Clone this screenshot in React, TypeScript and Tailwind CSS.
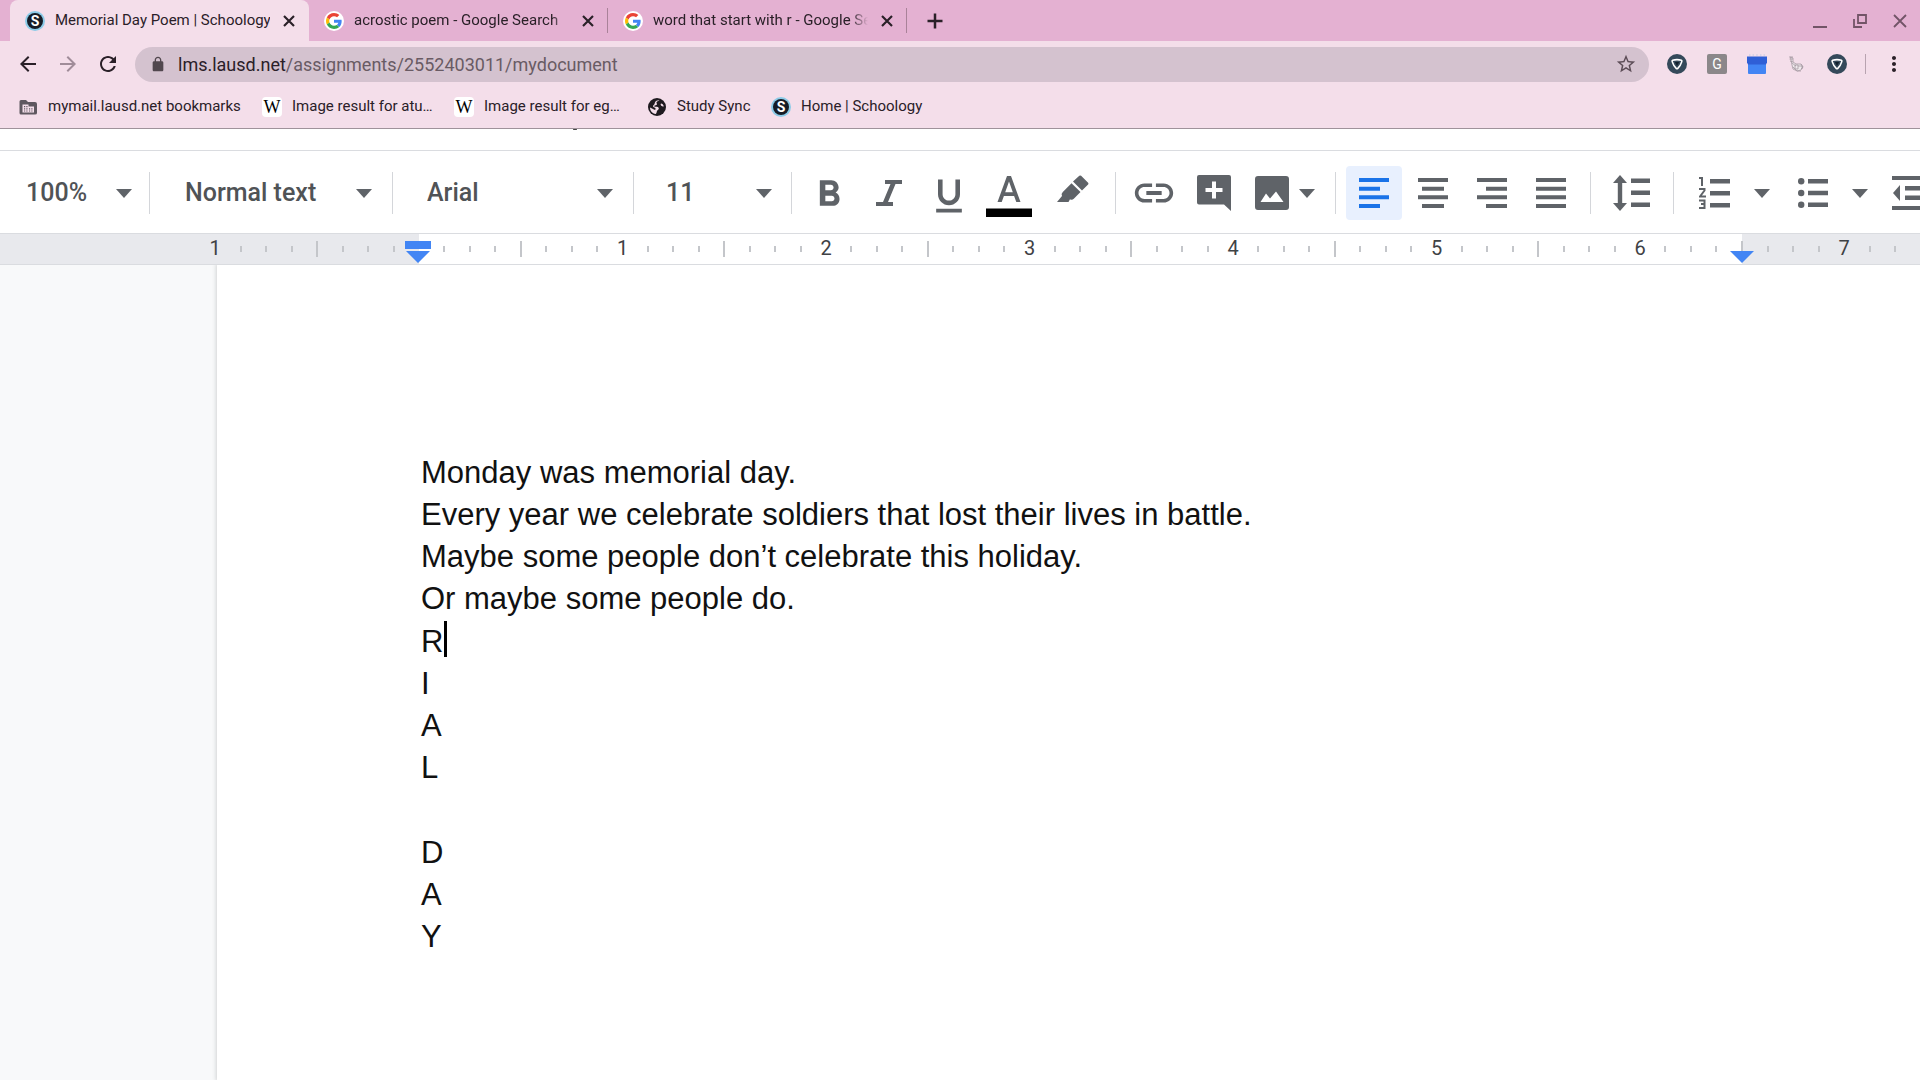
import React from "react";

type IconProps = { className?: string };

const Svg = ({
  className,
  box = "0 0 24 24",
  children,
}: {
  className?: string;
  box?: string;
  children: React.ReactNode;
}) => (
  <svg viewBox={box} className={className} fill="currentColor" aria-hidden="true">
    {children}
  </svg>
);

const GoogleIcon = () => (
  <span className="flex size-5 shrink-0 items-center justify-center rounded-full bg-white">
    <Svg className="size-4" box="0 0 48 48">
      <path fill="#EA4335" d="M24 9.5c3.54 0 6.71 1.22 9.21 3.6l6.85-6.85C35.9 2.38 30.47 0 24 0 14.62 0 6.51 5.38 2.56 13.22l7.98 6.19C12.43 13.72 17.74 9.5 24 9.5z" />
      <path fill="#4285F4" d="M46.98 24.55c0-1.57-.15-3.09-.38-4.55H24v9.02h12.94c-.58 2.96-2.26 5.48-4.78 7.18l7.73 6c4.51-4.18 7.09-10.36 7.09-17.65z" />
      <path fill="#FBBC05" d="M10.53 28.59c-.48-1.45-.76-2.99-.76-4.59s.27-3.14.76-4.59l-7.98-6.19C.92 16.46 0 20.12 0 24c0 3.88.92 7.54 2.56 10.78l7.97-6.19z" />
      <path fill="#34A853" d="M24 48c6.48 0 11.93-2.13 15.89-5.81l-7.73-6c-2.15 1.45-4.92 2.3-8.16 2.3-6.26 0-11.57-4.22-13.47-9.91l-7.98 6.19C6.51 42.62 14.62 48 24 48z" />
    </Svg>
  </span>
);

const SchoologyIcon = () => (
  <span className="flex size-5 shrink-0 items-center justify-center rounded-full bg-[#8ccbe8]">
    <span className="flex size-4 items-center justify-center rounded-full bg-[#151b26] text-[14px] leading-none font-bold text-white">
      S
    </span>
  </span>
);

const WikiIcon = () => (
  <span className="flex size-5 shrink-0 items-center justify-center rounded-sm bg-white font-['Liberation_Serif',serif] text-[18px] leading-none text-black">
    W
  </span>
);

const FolderIcon = () => (
  <Svg className="size-5 text-[#5f5860]" box="0 0 20 20">
    <path d="M3 3h5l2 2h7q2 0 2 2v9q0 1.500-2 1.500H3Q1.500 17.500 1.500 16V4.500Q1.500 3 3 3z" />
    <path fill="#f4deea" d="M4.500 7.500h6v2h5.500v6H4.500z" />
    <path d="M6 9h1.200v1.200H6zM8.300 9h1.200v1.200H8.300zM6 11.200h1.200v1.200H6zM8.300 11.200h1.200v1.200H8.300zM6 13.400h1.200v1.200H6zM8.300 13.400h1.200v1.200H8.300zM11 11.200h1.200v1.200H11zM13.300 11.200h1.200v1.200h-1.200zM11 13.400h1.200v1.200H11zM13.300 13.400h1.200v1.200h-1.200z" />
  </Svg>
);

const GlobeIcon = () => (
  <Svg className="size-5 text-[#1f1a20]" box="0 0 20 20">
    <circle cx="10" cy="10" r="9" />
    <path fill="#f4deea" d="M12.500 3.300c-1 .9-2.500.8-3 1.900-.3.900.8 1.400.4 2.200-.5.900-2 .5-2.600 1.300-.4.900.8 1.100 1.700 1.100 1.300 0 2.600.2 2.800 1.500.2 1.400-1.300 1.700-1.800 2.700-.4.900-.3 2.100-1.200 2.900C5 16.500 3 13.400 3 10.400c1.500.7 2.700 1.300 3.900 2.200.7.500 1.600.1 1.700-.7 0-1-1-1.200-1.800-1.600C5.600 9.700 6 8.400 7 7.700c.8-.5.500-1.500.9-2.300C8.600 4 10.500 3 12.500 3.300zM14 6.500c1.300 0 2.400 1.200 2.800 2.700-1.100.5-2.400.1-2.900-.9-.3-.6-.4-1.300.1-1.800z" />
  </Svg>
);

const ShieldIcon = () => (
  <Svg className="size-5" box="0 0 20 20">
    <circle cx="10" cy="10" r="10" fill="#34495a" />
    <path d="M5.600 6.200Q10 5 14.400 6.200Q15.200 6.500 14.800 7.600Q13.600 11.800 10.600 14.600Q10 15 9.400 14.600Q6.400 11.800 5.200 7.600Q4.800 6.500 5.600 6.200z" fill="#34495a" stroke="#fff" strokeWidth="1.600" strokeLinejoin="round" />
    <path d="M7.800 8h4.400L10 12z" fill="#10202c" />
  </Svg>
);

const GrayG = () => (
  <span className="flex size-5 items-center justify-center rounded-xs bg-[#8b878a] text-[14px] leading-none text-white">G</span>
);

const BlueBox = () => (
  <Svg className="size-5" box="0 0 20 20">
    <path fill="#d9d3e6" d="M2 0h1.500v2H2zM5.500 0H7v2H5.500zM9.200 0h1.500v2H9.200zM13 0h1.500v2H13zM16.500 0H18v2h-1.500z" />
    <path fill="#4285f4" d="M1 9h18v10q0 1-1 1H2q-1 0-1-1z" />
    <path fill="#2f5fd6" d="M0 2.500h20v6l-1 2H1l-1-2z" />
  </Svg>
);

const SketchIcon = () => (
  <Svg className="size-5" box="0 0 20 20">
    <g fill="none" stroke="#a79ba3" strokeWidth=".8">
      <path fill="#efe9ec" d="M3.500 3l2.500 1v4l3 2h5l2 3-2 3-4 1-4-2-1-4z" />
      <path d="M2 3h4M2.500 5H6M3 7l3 1M5 9l4 3M8 11h3v4H8zM11 12h4v3M14 10l2 3-2 2M6 13l4 4h4" />
    </g>
  </Svg>
);

const Close = ({ className }: IconProps) => (
  <Svg className={className}>
    <path d="M4.500 4.500l15 15M19.500 4.500l-15 15" stroke="currentColor" strokeWidth="3.200" fill="none" />
  </Svg>
);

const Caret = ({ className = "" }: IconProps) => (
  <svg viewBox="0 0 16 9" className={`h-[9px] w-4 text-[#5f6368] ${className}`} fill="currentColor" aria-hidden="true">
    <path d="M0 0h16L8 9z" />
  </svg>
);

const Tab = ({
  icon,
  title,
  active,
}: {
  icon: React.ReactNode;
  title: string;
  active?: boolean;
}) => (
  <div
    role="tab"
    aria-selected={!!active}
    className={
      active
        ? "flex h-full w-[299px] items-center rounded-t-lg bg-[#f4deea] pl-[15px]"
        : "flex h-full w-[299px] items-center pl-[15px]"
    }
  >
    {icon}
    <span
      className={
        active
          ? "ml-[10px] w-[215px] shrink-0 overflow-hidden whitespace-nowrap"
          : "ml-[10px] w-[215px] shrink-0 overflow-hidden mask-r-from-92% whitespace-nowrap"
      }
    >
      {title}
    </span>
    <button aria-label={`Close ${title}`} className="ml-[11px] flex size-4 shrink-0 items-center justify-center">
      <Close className="size-4" />
    </button>
    {!active && <span className="ml-[11px] h-[25px] w-px bg-[#a98299]" />}
  </div>
);

const Bookmark = ({ icon, label, className }: { icon: React.ReactNode; label: string; className: string }) => (
  <a href="#" className={`flex items-center gap-[10px] whitespace-nowrap ${className}`}>
    {icon}
    <span>{label}</span>
  </a>
);

const Divider = ({ className = "" }: IconProps) => (
  <span className={`h-[42px] w-px shrink-0 bg-[#d4d6da] ${className}`} />
);

const Dropdown = ({ label, value, className }: { label: string; value: string; className: string }) => (
  <label className={`grid shrink-0 items-center ${className}`}>
    <select
      aria-label={label}
      defaultValue={value}
      className="col-start-1 row-start-1 w-full appearance-none bg-transparent text-[25px] leading-8 font-medium text-[#505356] outline-none"
    >
      <option>{value}</option>
    </select>
    <Caret className="pointer-events-none col-start-1 row-start-1 justify-self-end" />
  </label>
);

const Tool = ({
  label,
  className = "w-[60px]",
  children,
}: {
  label: string;
  className?: string;
  children: React.ReactNode;
}) => (
  <button aria-label={label} className={`flex h-[54px] shrink-0 items-center justify-center rounded-sm ${className}`}>
    {children}
  </button>
);

const AlignIcon = ({ d }: { d: string }) => (
  <Svg className="h-[30px] w-[30px]" box="0 0 30 30">
    <path d={d} />
  </Svg>
);

const Ticks = ({ count, first, className }: { count: number; first: number; className: string }) => (
  <div className={`flex shrink-0 ${className}`}>
    {Array.from({ length: count }, (_, i) => {
      const eighth = i + first;
      const inch = Math.abs(eighth / 8);
      return (
        <div key={i} className="flex flex-1">
          <div className="flex w-0 items-center justify-center">
            {eighth % 8 === 0 ? (
              <span className="pb-[2px]">{inch === 0 ? "" : inch}</span>
            ) : eighth % 4 === 0 ? (
              <span className="h-4 w-[2px] shrink-0 bg-[#c4c6ca]" />
            ) : (
              <span className="h-[6px] w-[2px] shrink-0 bg-[#c4c6ca]" />
            )}
          </div>
        </div>
      );
    })}
  </div>
);

const stanzas = [
  [
    "Monday was memorial day.",
    "Every year we celebrate soldiers that lost their lives in battle.",
    "Maybe some people don’t celebrate this holiday.",
    "Or maybe some people do.",
  ],
  ["R", "I", "A", "L"],
  ["", "D", "A", "Y"],
];

export default function App() {
  return (
    <div className="flex h-screen flex-col overflow-hidden bg-white font-[Roboto,sans-serif] text-[#2a2028]">
      <header className="shrink-0 border-b border-[#9f929b] bg-[#f4deea] text-[15px]">
        <div className="flex h-[41px] bg-[#e4b1d2]">
          <div role="tablist" className="flex pl-[10px]">
            <Tab active icon={<SchoologyIcon />} title="Memorial Day Poem | Schoology" />
            <Tab icon={<GoogleIcon />} title="acrostic poem - Google Search" />
            <Tab icon={<GoogleIcon />} title="word that start with r - Google Search" />
          </div>
          <button aria-label="New tab" className="ml-[18px] flex w-5 items-center justify-center">
            <Svg className="size-5">
              <path d="M10.500 3h3v7.500H21v3h-7.500V21h-3v-7.500H3v-3h7.500z" />
            </Svg>
          </button>
          <div className="ml-auto flex items-center gap-6 pr-3 text-[#725467]">
            <button aria-label="Minimize">
              <Svg className="size-4" box="0 0 16 16"><path d="M1 13h14v2H1z" /></Svg>
            </button>
            <button aria-label="Restore">
              <Svg className="size-4" box="0 0 16 16">
                <path fill="none" stroke="currentColor" strokeWidth="1.800" d="M6 2h8v8H6zM2 6v8h8" />
              </Svg>
            </button>
            <button aria-label="Close window">
              <Svg className="size-4" box="0 0 16 16">
                <path fill="none" stroke="currentColor" strokeWidth="1.800" d="M2 2l12 12M14 2L2 14" />
              </Svg>
            </button>
          </div>
        </div>

        <div className="flex h-[46px] items-center pr-[14px] pl-4">
          <button aria-label="Back">
            <Svg className="size-6"><path d="M20 11H7.830l5.590-5.590L12 4l-8 8 8 8 1.410-1.410L7.830 13H20v-2z" /></Svg>
          </button>
          <button aria-label="Forward" className="ml-4 text-[#a08c99]">
            <Svg className="size-6"><path d="M12 4l-1.410 1.410L16.170 11H4v2h12.170l-5.580 5.590L12 20l8-8z" /></Svg>
          </button>
          <button aria-label="Reload" className="ml-4">
            <Svg className="size-6"><path d="M17.650 6.350C16.200 4.900 14.210 4 12 4c-4.420 0-7.990 3.580-7.990 8s3.570 8 7.990 8c3.730 0 6.840-2.550 7.730-6h-2.080c-.82 2.330-3.040 4-5.650 4-3.310 0-6-2.690-6-6s2.690-6 6-6c1.660 0 3.140.69 4.220 1.780L13 11h7V4l-2.350 2.350z" /></Svg>
          </button>
          <div className="ml-[15px] flex h-[35px] flex-1 items-center rounded-full bg-[#d4c2cf] pr-3 pl-[15px]">
            <Svg className="size-4 text-[#51474e]"><path d="M18 8h-1V6c0-2.760-2.240-5-5-5S7 3.240 7 6v2H6c-1.100 0-2 .9-2 2v11c0 1.100.9 2 2 2h12c1.100 0 2-.9 2-2V10c0-1.100-.9-2-2-2zM9 6c0-1.660 1.340-3 3-3s3 1.340 3 3v2H9V6z" /></Svg>
            <a href="#" className="ml-3 flex-1 text-[18px] text-[#695b64]">
              <span className="text-[#2a2028]">lms.lausd.net</span>/assignments/2552403011/mydocument
            </a>
            <button aria-label="Bookmark this page" className="text-[#5c4d57]">
              <Svg className="size-[22px]"><path d="M22 9.240l-7.190-.62L12 2 9.190 8.630 2 9.240l5.460 4.730L5.820 21 12 17.270 18.180 21l-1.630-7.030L22 9.240zM12 15.400l-3.760 2.270 1-4.280-3.320-2.880 4.380-.38L12 6.100l1.710 4.040 4.380.38-3.320 2.880 1 4.280L12 15.400z" /></Svg>
            </button>
          </div>
          <div className="ml-[18px] flex items-center gap-5">
            <button aria-label="Shield extension"><ShieldIcon /></button>
            <button aria-label="G extension"><GrayG /></button>
            <button aria-label="Calendar extension"><BlueBox /></button>
            <button aria-label="Sketch extension"><SketchIcon /></button>
            <button aria-label="Second shield extension"><ShieldIcon /></button>
          </div>
          <span className="ml-[18px] h-5 w-px bg-[#b8a3b0]" />
          <button aria-label="Menu" className="ml-4">
            <Svg className="size-6"><path d="M12 8c1.100 0 2-.9 2-2s-.9-2-2-2-2 .9-2 2 .9 2 2 2zm0 2c-1.100 0-2 .9-2 2s.9 2 2 2 2-.9 2-2-.9-2-2-2zm0 6c-1.100 0-2 .9-2 2s.9 2 2 2 2-.9 2-2-.9-2-2-2z" /></Svg>
          </button>
        </div>

        <nav aria-label="Bookmarks" className="flex h-[41px] items-center pb-[2px] pl-[18px]">
          <Bookmark className="w-[244px]" icon={<FolderIcon />} label="mymail.lausd.net bookmarks" />
          <Bookmark className="w-48" icon={<WikiIcon />} label="Image result for atu…" />
          <Bookmark className="w-[193px]" icon={<WikiIcon />} label="Image result for eg…" />
          <Bookmark className="w-[124px]" icon={<GlobeIcon />} label="Study Sync" />
          <Bookmark className="" icon={<SchoologyIcon />} label="Home | Schoology" />
        </nav>
      </header>

      <div className="h-[22px] shrink-0 border-b border-[#dadce0] pl-[573px]">
        <div className="h-px w-1 rounded-full bg-[#444]" />
      </div>

      <div role="toolbar" aria-label="Formatting" className="flex h-[83px] shrink-0 items-center overflow-hidden border-b border-[#dadce0] pt-[2px] pl-[26px] text-[#5f6368]">
        <Dropdown label="Zoom" value="100%" className="w-[106px]" />
        <Divider className="ml-[17px]" />
        <Dropdown label="Style" value="Normal text" className="ml-[35px] w-[187px]" />
        <Divider className="ml-[20px]" />
        <Dropdown label="Font" value="Arial" className="ml-[34px] w-[186px]" />
        <Divider className="ml-[20px]" />
        <Dropdown label="Font size" value="11" className="ml-8 w-[106px]" />
        <Divider className="ml-[19px]" />

        <div className="ml-[7px] flex">
          <Tool label="Bold">
            <Svg className="size-11"><path d="M15.600 11.790c.97-.67 1.650-1.770 1.650-2.790 0-2.260-1.750-4-4-4H7v14h7.040c2.090 0 3.710-1.700 3.710-3.790 0-1.520-.86-2.820-2.150-3.420zM10 7.500h3c.83 0 1.500.67 1.500 1.500s-.67 1.500-1.500 1.500h-3v-3zm3.500 9H10v-3h3.500c.83 0 1.500.67 1.500 1.500s-.67 1.500-1.500 1.500z" /></Svg>
          </Tool>
          <Tool label="Italic">
            <Svg className="h-[26px] w-[26px]" box="0 0 26 26"><path d="M9 0h17v4h-6.500l-7.500 18h5v4H0v-4h7l7.500-18H9z" /></Svg>
          </Tool>
          <Tool label="Underline">
            <Svg className="mt-[6px] size-11"><path d="M12 17c3.310 0 6-2.690 6-6V3h-2.500v8c0 1.930-1.570 3.500-3.500 3.500S8.500 12.930 8.500 11V3H6v8c0 3.310 2.690 6 6 6zm-7 2v2h14v-2H5z" /></Svg>
          </Tool>
          <Tool label="Text color">
            <Svg className="mt-[6px] h-[42px] w-[46px] shrink-0" box="0 0 46 42">
              <path d="M21 1h4l9.500 26h-4.200l-2.200-6H17.900l-2.200 6h-4.200zM19.200 17.300h7.600L23 6.500z" />
              <path fill="#000" d="M0 33.500h46V42H0z" />
            </Svg>
          </Tool>
          <Tool label="Highlight color" className="w-[68px]">
            <Svg className="mb-2 h-[28px] w-[32px]" box="0 0 32 28">
              <path d="M22.300.8q.9-.8 1.800 0l7 7q.8.900 0 1.700L25 15.500 16 6.600zM14.500 8.200l9 8.800-6.700 6.700q-1.800 1.800-3.800.5L11.500 27H0l5-6q-1.200-2 .8-4z" />
            </Svg>
          </Tool>
        </div>
        <Divider className="ml-2" />
        <div className="ml-2 flex">
          <Tool label="Insert link" className="w-[60px]">
            <Svg className="size-[46px]"><path d="M3.900 12c0-1.710 1.390-3.100 3.100-3.100h4V7H7c-2.760 0-5 2.240-5 5s2.240 5 5 5h4v-1.900H7c-1.710 0-3.100-1.390-3.100-3.100zM8 13h8v-2H8v2zm9-6h-4v1.900h4c1.710 0 3.100 1.390 3.100 3.100s-1.390 3.100-3.100 3.100h-4V17h4c2.760 0 5-2.240 5-5s-2.240-5-5-5z" /></Svg>
          </Tool>
          <Tool label="Add comment">
            <Svg className="h-9 w-[34px]" box="0 0 34 36">
              <path d="M2 0h30q2 0 2 2v34l-7-6.500H2q-2 0-2-2V2Q0 0 2 0zM15 6.500V13H8.500v4H15v6.500h4V17h6.500v-4H19V6.500z" />
            </Svg>
          </Tool>
          <Tool label="Insert image" className="w-[82px] gap-[10px]">
            <Svg className="size-[34px] shrink-0" box="0 0 34 34">
              <path d="M3 0h28q3 0 3 3v28q0 3-3 3H3q-3 0-3-3V3Q0 0 3 0zM5.500 26h23L21 15.500l-6 7-4-5z" fillRule="evenodd" />
            </Svg>
            <Caret />
          </Tool>
        </div>
        <Divider className="ml-[9px]" />
        <div className="ml-[10px] flex gap-[3px]">
          <Tool label="Align left" className="w-14 bg-[#e8f0fe] text-[#1a73e8]">
            <AlignIcon d="M0 0h30v4H0zM0 8.700h21v4H0zM0 17.300h30v4H0zM0 26h21v4H0z" />
          </Tool>
          <Tool label="Align center" className="w-14">
            <AlignIcon d="M0 0h30v4H0zM4 8.700h22v4H4zM0 17.300h30v4H0zM4 26h22v4H4z" />
          </Tool>
          <Tool label="Align right" className="w-14">
            <AlignIcon d="M0 0h30v4H0zM9 8.700h21v4H9zM0 17.300h30v4H0zM9 26h21v4H9z" />
          </Tool>
          <Tool label="Justify" className="w-14">
            <AlignIcon d="M0 0h30v4H0zM0 8.700h30v4H0zM0 17.300h30v4H0zM0 26h30v4H0z" />
          </Tool>
        </div>
        <Divider className="ml-[11px]" />
        <Tool label="Line spacing" className="ml-[11px] w-[59px]">
          <Svg className="h-9 w-[37px]" box="0 0 37 36">
            <path d="M7 0l7 8H9.200v20H14l-7 8-7-8h4.800V8H0zM18 3.500h19v4.500H18zM18 15.500h19V20H18zM18 27.500h19V32H18z" />
          </Svg>
        </Tool>
        <Divider className="ml-[12px]" />
        <button aria-label="Numbered list" className="ml-[25px] flex shrink-0 items-center gap-6">
          <Svg className="h-[34px] w-[31px]" box="0 0 31 34">
            <path d="M11 3h20v4.500H11zM11 15h20v4.500H11zM11 27h20v4.500H11z" />
            <path fill="none" stroke="currentColor" strokeWidth="2" d="M0 2h3v8M0 13h5.500v1.500L1 20.500h6M0 24.500h5.500V32H0M2 28h3.500" />
          </Svg>
          <Caret />
        </button>
        <button aria-label="Bulleted list" className="ml-7 flex shrink-0 items-center gap-6">
          <Svg className="h-[32px] w-[30px]" box="0 0 30 32">
            <path d="M10 2h20v4.500H10zM10 13.800h20v4.500H10zM10 25.600h20v4.500H10z" />
            <circle cx="3.200" cy="4.200" r="3.200" /><circle cx="3.200" cy="16" r="3.200" /><circle cx="3.200" cy="27.800" r="3.200" />
          </Svg>
          <Caret />
        </button>
        <button aria-label="Decrease indent" className="ml-6 shrink-0">
          <Svg className="h-[34px] w-[34px]" box="0 0 34 34">
            <path d="M0 0h34v4H0zM13 10h21v4.500H13zM13 19.500h21V24H13zM0 30h34v4H0zM8 9v16l-7-8z" />
          </Svg>
        </button>
      </div>

      <div className="relative flex h-[31px] shrink-0 overflow-hidden border-b border-[#dadce0] bg-[#e8e9ed] text-[20px] leading-6 text-[#3f4245]">
        <Ticks className="ml-[215px] w-[204px]" count={8} first={-8} />
        <Ticks className="w-[1323px] bg-white" count={52} first={0} />
        <Ticks className="w-[204px]" count={8} first={52} />
        <svg viewBox="0 0 26 22" className="absolute top-[7px] left-[405px] h-[22px] w-[26px] text-[#4285f4]" fill="currentColor" aria-hidden="true">
          <path d="M0 0h26v8H0zM1 10h24L13 22z" />
        </svg>
        <svg viewBox="0 0 24 12" className="absolute top-[17px] left-[1730px] h-3 w-6 text-[#4285f4]" fill="currentColor" aria-hidden="true">
          <path d="M0 0h24L12 12z" />
        </svg>
      </div>

      <main className="flex min-h-0 flex-1 bg-[#f8f9fa] pl-[217px]">
        <article className="flex flex-1 flex-col gap-px bg-white pt-[187px] pl-[204px] font-['Liberation_Sans',Arial,sans-serif] text-[31px] leading-[42px] text-[#111] shadow-[0_0_4px_1px_rgba(60,64,67,0.2)]">
          {stanzas.map((lines, s) => (
            <div key={s}>
              {lines.map((line, i) => (
                <p key={i} className="flex h-[42px] items-center">
                  {line}
                  {line === "R" && <span className="ml-px h-9 w-[3px] self-start bg-black" />}
                </p>
              ))}
            </div>
          ))}
        </article>
      </main>
    </div>
  );
}
